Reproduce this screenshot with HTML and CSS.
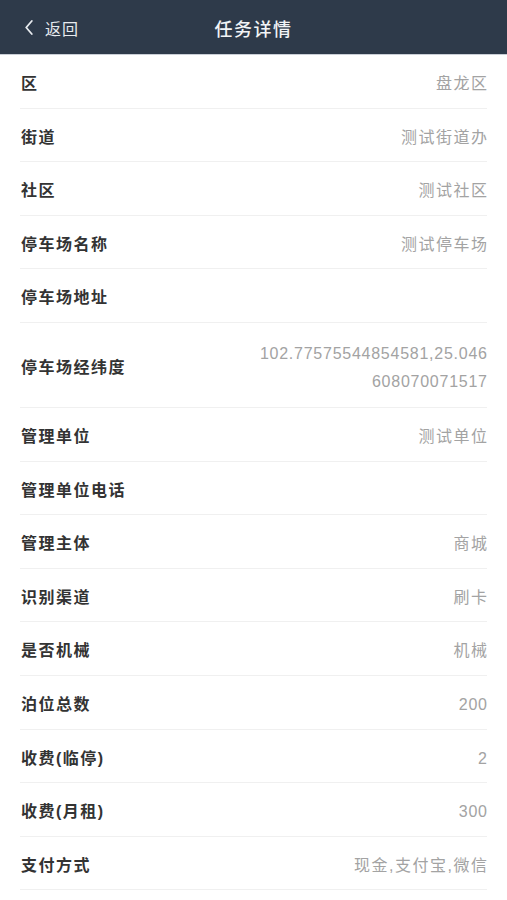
FILE: index.html
```html
<!DOCTYPE html>
<html lang="zh-CN">
<head>
<meta charset="utf-8">
<title>任务详情</title>
<link rel="stylesheet" href="styles.css">
</head>
<body>
<header class="nav">
  <div class="back">
    <svg class="chev" width="8" height="15" viewBox="0 0 8 15"><path d="M6.8 1 L1.2 7.5 L6.8 14" fill="none" stroke="#e8ebef" stroke-width="1.8" stroke-linecap="round" stroke-linejoin="round"/></svg>
    <span>返回</span>
  </div>
  <h1 class="title">任务详情</h1>
</header>
<main class="list">
  <div class="row"><span class="label">区</span><span class="value">盘龙区</span></div>
  <div class="row"><span class="label">街道</span><span class="value">测试街道办</span></div>
  <div class="row"><span class="label">社区</span><span class="value">测试社区</span></div>
  <div class="row"><span class="label">停车场名称</span><span class="value">测试停车场</span></div>
  <div class="row"><span class="label">停车场地址</span><span class="value"></span></div>
  <div class="row"><span class="label">停车场经纬度</span><span class="value num multi">102.77575544854581,25.046608070071517</span></div>
  <div class="row"><span class="label">管理单位</span><span class="value">测试单位</span></div>
  <div class="row"><span class="label">管理单位电话</span><span class="value"></span></div>
  <div class="row"><span class="label">管理主体</span><span class="value">商城</span></div>
  <div class="row"><span class="label">识别渠道</span><span class="value">刷卡</span></div>
  <div class="row"><span class="label">是否机械</span><span class="value">机械</span></div>
  <div class="row"><span class="label">泊位总数</span><span class="value num">200</span></div>
  <div class="row"><span class="label">收费(临停)</span><span class="value num">2</span></div>
  <div class="row"><span class="label">收费(月租)</span><span class="value num">300</span></div>
  <div class="row"><span class="label">支付方式</span><span class="value">现金,支付宝,微信</span></div>
</main>
</body>
</html>
```
FILE: styles.css
```css
* { box-sizing: border-box; }
html, body { margin: 0; padding: 0; background: #ffffff; }
body {
  font-family: "Liberation Sans", "Noto Sans CJK SC", sans-serif;
  color: #333333;
}
.nav {
  position: relative;
  height: 55px;
  background: #2e3a4a;
  border-bottom: 1px solid #c9ced6;
  display: flex;
  align-items: center;
  justify-content: center;
}
.back {
  position: absolute;
  left: 25px;
  top: 1px;
  bottom: 0;
  display: flex;
  align-items: center;
  gap: 12px;
  color: #e8ebef;
  font-size: 16px;
  letter-spacing: 1px;
}
.chev { display: block; }
.title {
  margin: 1px 0 0;
  font-size: 18px;
  font-weight: 500;
  color: #f2f4f6;
  letter-spacing: 1.5px;
}
.list { display: flex; flex-direction: column; }
.row {
  margin: 0 20px;
  padding: 17px 0 11px;
  border-bottom: 1px solid #f0f0f0;
  display: flex;
  justify-content: space-between;
  align-items: center;
  min-height: 53.6px;
}
.label {
  flex-shrink: 0;
  font-size: 16px;
  line-height: 24.6px;
  font-weight: bold;
  color: #333333;
  letter-spacing: 1.5px;
  margin-left: 1px;
}
.value {
  font-size: 16px;
  line-height: 24.6px;
  color: #a3a3a3;
  letter-spacing: 1.5px;
  text-align: right;
  margin-right: -1.5px;
}
.value.num {
  letter-spacing: 0.75px;
  margin-right: -0.75px;
}
.value.multi {
  line-height: 28px;
  max-width: 232px;
  word-break: break-all;
}
```
